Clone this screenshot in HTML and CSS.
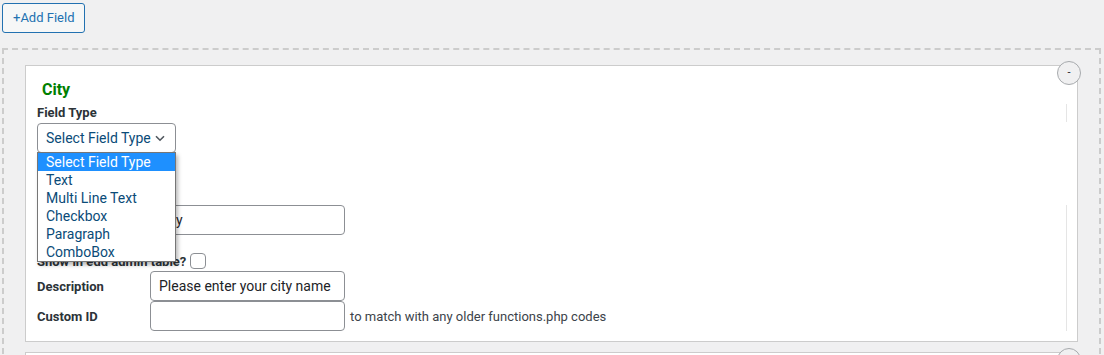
FILE: index.html
```html
<!DOCTYPE html>
<html lang="en">
<head>
<meta charset="utf-8">
<title>Fields</title>
<link rel="stylesheet" href="styles.css">
</head>
<body>
<div class="toolbar">
  <button class="add-btn" type="button">+Add Field</button>
</div>
<div class="fields">
  <div class="card">
    <button class="remove" type="button">-</button>
    <h3 class="field-title">City</h3>
    <div class="head-label">Field Type</div>
    <div class="select-wrap">
      <div class="select">
        <span>Select Field Type</span>
        <svg class="chev" width="10" height="7" viewBox="0 0 10 7"><path d="M1 1.2 L5 5.2 L9 1.2" fill="none" stroke="#50575e" stroke-width="1.6"/></svg>
      </div>
      <ul class="dropdown">
        <li class="active">Select Field Type</li>
        <li>Text</li>
        <li>Multi Line Text</li>
        <li>Checkbox</li>
        <li>Paragraph</li>
        <li>ComboBox</li>
      </ul>
    </div>
    <div class="settings">
      <div class="row">
        <label class="lbl">Label</label>
        <input class="txt" type="text" value="City">
      </div>
      <div class="row-check">
        <label class="lbl">Show in edd admin table?</label>
        <span class="checkbox"></span>
      </div>
      <div class="row">
        <label class="lbl">Description</label>
        <input class="txt" type="text" value="Please enter your city name">
      </div>
      <div class="row">
        <label class="lbl">Custom ID</label>
        <input class="txt" type="text" value="">
        <span class="hint">to match with any older functions.php codes</span>
      </div>
    </div>
  </div>
  <div class="card card-next">
    <button class="remove" type="button">-</button>
    <h3 class="field-title">State</h3>
    <div class="head-label">Field Type</div>
  </div>
</div>
</body>
</html>
```

FILE: styles.css
```css
* { box-sizing: border-box; }

html, body {
  background: #f0f0f1;
}

body {
  margin: 0;
  padding: 3px 2px 0;
  font-family: Roboto, "Liberation Sans", Arial, sans-serif;
  color: #1d2327;
  overflow: hidden;
}

.toolbar {
  display: flex;
}

.add-btn {
  height: 30px;
  padding: 0 10px;
  border: 1px solid #2271b1;
  border-radius: 3px;
  background: #f6f7f7;
  color: #2271b1;
  font-family: Roboto, "Liberation Sans", Arial, sans-serif;
  font-size: 13px;
  line-height: 28px;
}

.fields {
  margin-top: 15px;
  width: 1099px;
  border: 2px dashed #cccccc;
  padding: 15px 21px 0 21px;
}

.card {
  position: relative;
  background: #fff;
  border: 1px solid #cccccc;
  padding: 0 10px 10px 11px;
  margin-bottom: 10px;
}

.card-next {
  height: 120px;
}

.remove {
  position: absolute;
  top: -5px;
  right: -4px;
  width: 24px;
  height: 24px;
  border-radius: 50%;
  border: 1px solid #a7aaad;
  background: #f0f0f1;
  color: #1d2327;
  font-family: Roboto, "Liberation Sans", Arial, sans-serif;
  font-size: 11px;
  line-height: 20px;
  padding: 0;
  text-align: center;
}

.field-title {
  margin: 0;
  padding: 15px 0 0 5px;
  font-size: 16px;
  line-height: 18px;
  font-weight: 700;
  color: #008000;
}

.head-label {
  margin-top: 5px;
  height: 18px;
  line-height: 18px;
  font-size: 13px;
  font-weight: 700;
  color: #2c3338;
  border-right: 1px solid #e5e5e5;
}

.select-wrap {
  position: relative;
  width: 139px;
  margin-top: 1px;
}

.select {
  display: flex;
  align-items: center;
  justify-content: space-between;
  height: 30px;
  padding: 0 10px 0 8px;
  border: 1px solid #8c8f94;
  border-radius: 4px;
  font-size: 14px;
  color: #0a4b78;
  background: #fff;
}

.chev {
  display: block;
}

.dropdown {
  position: absolute;
  z-index: 5;
  top: 29px;
  left: 0;
  width: 139px;
  margin: 0;
  padding: 0;
  list-style: none;
  background: #fff;
  border: 1px solid #767676;
  box-shadow: 2px 3px 4px rgba(0, 0, 0, 0.28);
}

.dropdown li {
  height: 18px;
  line-height: 18px;
  padding-left: 8px;
  font-size: 14px;
  color: #0a4b78;
  white-space: nowrap;
}

.dropdown li.active {
  background: #1e90ff;
  color: #fff;
}

.settings {
  margin-top: 52px;
  border-right: 1px solid #e5e5e5;
}

.row {
  display: flex;
  align-items: center;
}

.lbl {
  font-size: 13px;
  font-weight: 700;
  color: #2c3338;
}

.row .lbl {
  width: 113px;
  flex: none;
}

.txt {
  width: 195px;
  height: 30px;
  padding: 0 8px;
  border: 1px solid #8c8f94;
  border-radius: 4px;
  font-family: Roboto, "Liberation Sans", Arial, sans-serif;
  font-size: 14px;
  color: #1d2327;
  background: #fff;
  margin: 0;
}

.row-check {
  display: flex;
  align-items: center;
  gap: 4px;
  height: 18px;
  margin: 17px 0 1px;
}

.checkbox {
  display: block;
  width: 16px;
  height: 16px;
  border: 1px solid #8c8f94;
  border-radius: 4px;
  background: #fff;
}

.hint {
  margin-left: 5px;
  font-size: 13px;
  color: #3c434a;
}
```
